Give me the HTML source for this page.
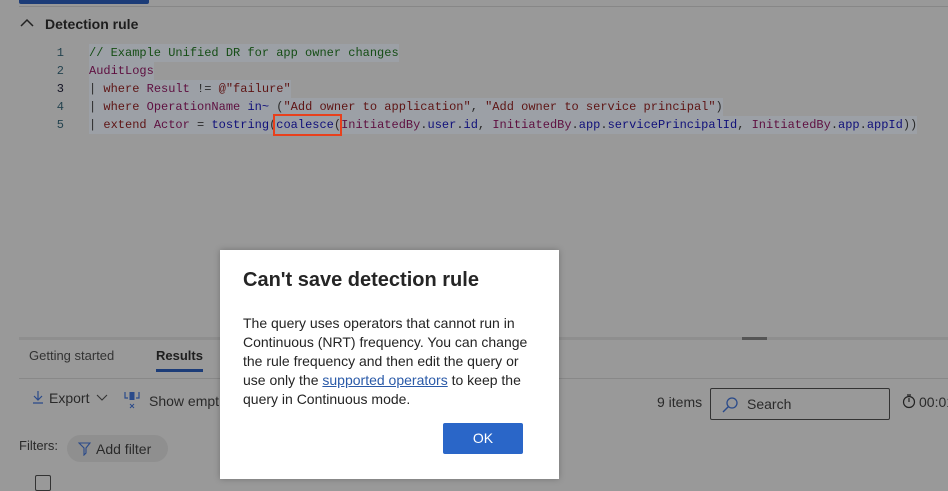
<!DOCTYPE html>
<html><head><meta charset="utf-8"><style>
body{margin:0;width:948px;height:480px;overflow:hidden;background:#999;font-family:"Liberation Sans",sans-serif;position:relative;color:#1e1e1e}
.abs{position:absolute}
.code{font-family:"Liberation Mono",monospace;font-size:12px;white-space:pre;line-height:18px}
.ln{position:absolute;left:40px;width:24px;text-align:right;color:#24434f;font-family:"Liberation Mono",monospace;font-size:12px;line-height:18px}
.line{position:absolute;left:89px;background:#9ca0a6;height:18px}
.g{color:#154d15}.k{color:#5e0f40}.r{color:#5e1414}.b{color:#10107a}.t{color:#2a2a2a}
</style></head><body>
<div class="abs" style="left:19px;top:0;width:130px;height:4px;background:#1c3c78;border-radius:0 0 2px 2px"></div>
<div class="abs" style="left:19px;top:6px;width:929px;height:1px;background:#878787"></div>
<svg class="abs" style="left:20px;top:18px" width="14" height="10"><path d="M1 8 L7 2 L13 8" stroke="#222" stroke-width="1.5" fill="none"/></svg>
<div class="abs" style="left:45px;top:16px;font-size:14px;font-weight:bold;color:#1e1e1e">Detection rule</div>
<div class="ln" style="top:44px">1</div><div class="ln" style="top:62px">2</div><div class="ln" style="top:80px;color:#112">3</div><div class="ln" style="top:98px">4</div><div class="ln" style="top:116px">5</div>
<div class="line code" style="top:44px"><span class="g">// Example Unified DR for app owner changes</span></div>
<div class="line code" style="top:62px"><span class="k">AuditLogs</span></div>
<div class="line code" style="top:80px"><span class="t">| </span><span class="r">where</span> <span class="k">Result</span> <span class="t">!=</span> <span class="r">@"failure"</span></div>
<div class="line code" style="top:98px"><span class="t">| </span><span class="r">where</span> <span class="k">OperationName</span> <span class="b">in~</span> <span class="t">(</span><span class="r">"Add owner to application"</span><span class="t">, </span><span class="r">"Add owner to service principal"</span><span class="t">)</span></div>
<div class="line code" style="top:116px"><span class="t">| </span><span class="r">extend</span> <span class="k">Actor</span> <span class="t">=</span> <span class="b">tostring</span><span class="t">(</span><span class="b">coalesce</span><span class="t">(</span><span class="k">InitiatedBy</span><span class="t">.</span><span class="b">user</span><span class="t">.</span><span class="b">id</span><span class="t">, </span><span class="k">InitiatedBy</span><span class="t">.</span><span class="b">app</span><span class="t">.</span><span class="b">servicePrincipalId</span><span class="t">, </span><span class="k">InitiatedBy</span><span class="t">.</span><span class="b">app</span><span class="t">.</span><span class="b">appId</span><span class="t">))</span></div>
<div class="abs" style="left:273px;top:114px;width:65px;height:18px;border:2px solid #e8401c"></div>
<div class="abs" style="left:19px;top:337px;width:929px;height:3px;background:#8e8e8e"></div>
<div class="abs" style="left:742px;top:337px;width:25px;height:3px;background:#555"></div>
<div class="abs" style="left:29px;top:348px;font-size:13px;color:#333">Getting started</div>
<div class="abs" style="left:156px;top:348px;font-size:13px;font-weight:bold;color:#1e1e1e">Results</div>
<div class="abs" style="left:156px;top:369px;width:47px;height:3px;background:#1c3c78"></div>
<div class="abs" style="left:19px;top:378px;width:929px;height:1px;background:#888"></div>
<svg class="abs" style="left:32px;top:390px" width="12" height="14"><path d="M6 1V10M2 6L6 10L10 6M1 13H11" stroke="#2a4a8a" stroke-width="1.2" fill="none"/></svg>
<div class="abs" style="left:49px;top:390px;font-size:14px;color:#2a2a2a">Export</div>
<svg class="abs" style="left:96px;top:394px" width="12" height="8"><path d="M1 1L6 6L11 1" stroke="#333" stroke-width="1.1" fill="none"/></svg>
<svg class="abs" style="left:124px;top:391px" width="16" height="18"><path d="M1 1V7H4M15 1V7H12" stroke="#2a4a8a" stroke-width="1.2" fill="none"/><rect x="5.5" y="1" width="5" height="8" fill="#2a4a8a"/><path d="M6 13L10 17M10 13L6 17" stroke="#2a4a8a" stroke-width="1"/></svg>
<div class="abs" style="left:149px;top:393px;font-size:14px;color:#2a2a2a">Show empt</div>
<div class="abs" style="left:19px;top:438px;font-size:13px;color:#2a2a2a">Filters:</div>
<div class="abs" style="left:67px;top:435px;width:101px;height:27px;background:#8f8f8f;border-radius:14px"></div>
<svg class="abs" style="left:78px;top:442px" width="13" height="14"><path d="M1 1H12L8 6V11L6 13V6Z" stroke="#2a4a8a" stroke-width="1.1" fill="none"/></svg>
<div class="abs" style="left:96px;top:441px;font-size:14px;color:#2a2a2a">Add filter</div>
<div class="abs" style="left:35px;top:475px;width:14px;height:14px;border:1px solid #333;border-radius:2px"></div>
<div class="abs" style="left:657px;top:394px;font-size:14px;color:#2a2a2a">9 items</div>
<div class="abs" style="left:710px;top:388px;width:178px;height:30px;border:1px solid #333;border-radius:2px"></div>
<svg class="abs" style="left:721px;top:396px" width="18" height="18"><circle cx="11" cy="7" r="5" stroke="#2a4a8a" stroke-width="1.3" fill="none"/><path d="M7.5 10.5L2 16" stroke="#2a4a8a" stroke-width="1.4"/></svg>
<div class="abs" style="left:747px;top:396px;font-size:14px;color:#2a2a2a">Search</div>
<svg class="abs" style="left:901px;top:393px" width="16" height="16"><circle cx="8" cy="9" r="5.5" stroke="#222" stroke-width="1.2" fill="none"/><path d="M6 2H10M8 5V9" stroke="#222" stroke-width="1.2"/></svg>
<div class="abs" style="left:919px;top:394px;font-size:14px;color:#2a2a2a">00:01</div>
<div class="abs" style="left:220px;top:250px;width:339px;height:229px;background:#fff;box-shadow:0 0 6px rgba(0,0,0,.25)">
<div class="abs" style="left:23px;top:19px;font-size:20px;font-weight:bold;color:#252525">Can't save detection rule</div>
<div class="abs" style="left:23px;top:64px;width:292px;font-size:14px;line-height:19px;color:#242424">The query uses operators that cannot run in Continuous (NRT) frequency. You can change the rule frequency and then edit the query or use only the <span style="color:#2a5aa8;text-decoration:underline">supported operators</span> to keep the query in Continuous mode.</div>
<div class="abs" style="left:223px;top:173px;width:80px;height:31px;background:#2a66c8;border-radius:2px;color:#fff;font-size:14px;text-align:center;line-height:31px">OK</div>
</div>
</body></html>
